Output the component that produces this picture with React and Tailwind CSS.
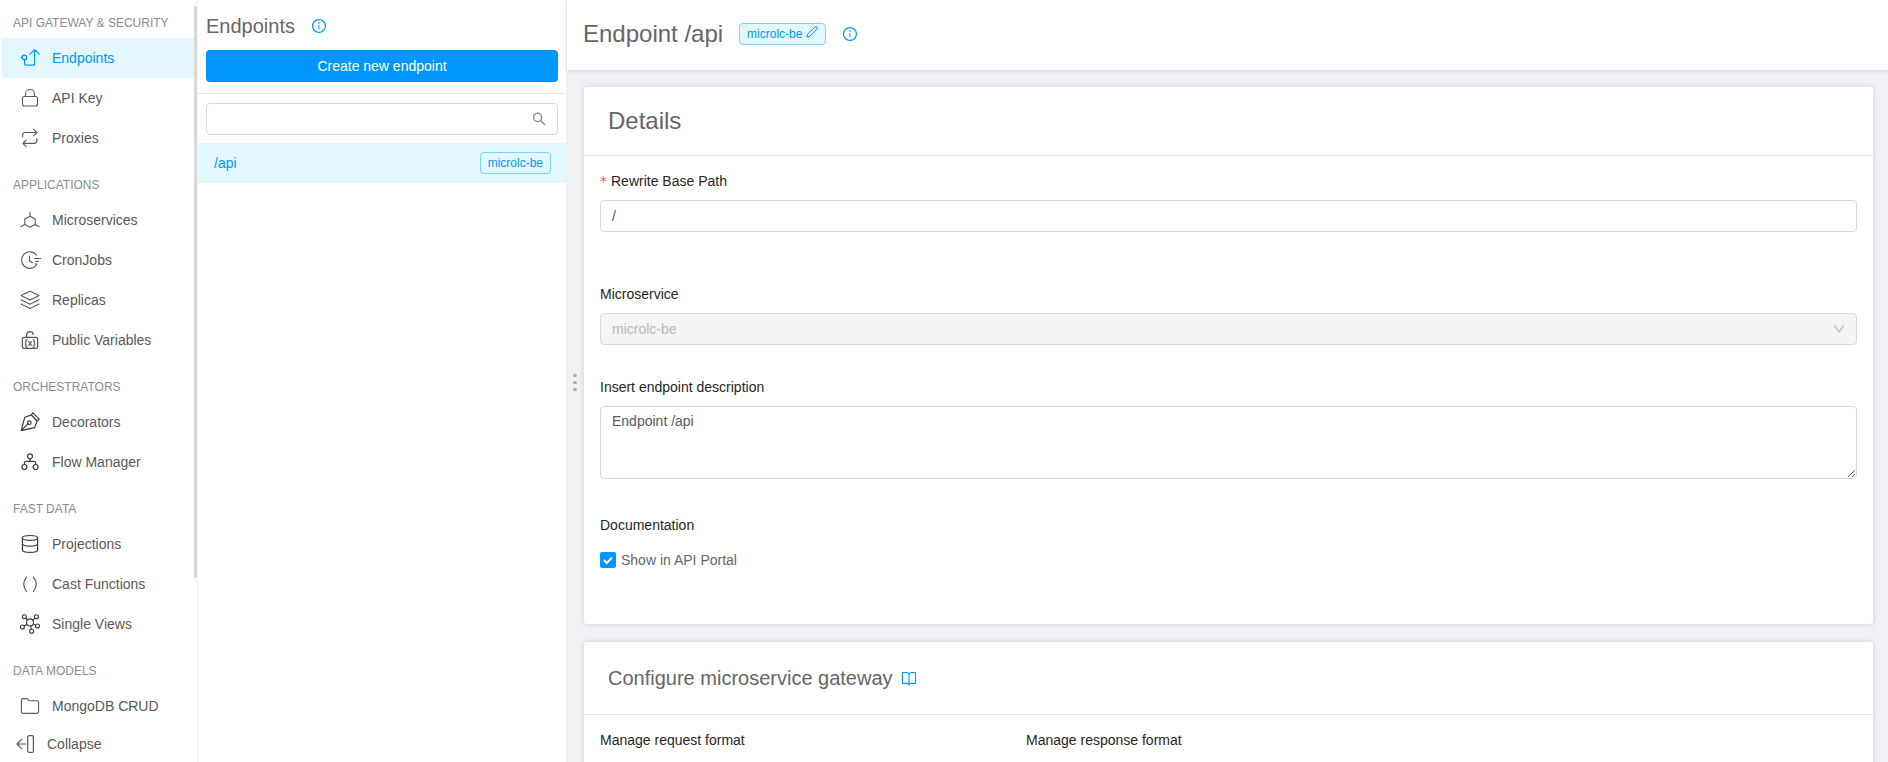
import React from "react";
import { AiOutlineInfoCircle } from "react-icons/ai";

function Icon({ children, w = 1, className = "" }) {
  return (
    <svg
      width="20"
      height="20"
      viewBox="0 0 20 20"
      fill="none"
      stroke="currentColor"
      strokeWidth={w}
      strokeLinecap="round"
      strokeLinejoin="round"
      className={`shrink-0 overflow-visible ${className}`}
    >
      {children}
    </svg>
  );
}

const icons = {
  endpoints: (
    <Icon w={1.2}>
      <circle cx="4.4" cy="9.4" r="2.3" />
      <path d="M1.2 9.4h.9M4.6 11.8v3.4q0 2 2 2h6q2 0 2-2V2M10 6.2l4.6-4.6 4.6 4.6" />
    </Icon>
  ),
  key: (
    <Icon w={1.1}>
      <rect x="2.5" y="8.5" width="15" height="9.5" rx="2" />
      <path d="M5.5 8.5V6a4.5 4.5 0 0 1 9 0v2.5" />
    </Icon>
  ),
  proxies: (
    <Icon w={1.1}>
      <path d="M2.7 9V7q0-2.5 2.5-2.5h11.6M13.5 1.2l3.4 3.3-3.4 3.3M16.9 10.5v2q0 2.9-2.5 2.9H2.9M6.2 12.2l-3.4 3.2 3.4 3.3" />
    </Icon>
  ),
  micro: (
    <Icon w={1.1}>
      <path d="M10 6.2L15.2 9v5.4L10 17.3l-5.2-2.9V9zM10 2v4.2M4.8 14.4L1 16.6M15.2 14.4l3.8 2.2" />
    </Icon>
  ),
  cron: (
    <Icon w={1.1}>
      <path d="M16.6 5.2a8.3 8.3 0 1 0 0 9.8M9.5 6v5l3 1.8M14.7 8.5h6M15.6 11.5h3.2M14.9 14h2" />
    </Icon>
  ),
  replicas: (
    <Icon w={1.1}>
      <path d="M10 1.2l9 4.3-9 4.5-9-4.5zM1 9.8l9 4.4 9-4.4M1 14l9 4.4 9-4.4" />
    </Icon>
  ),
  variables: (
    <Icon w={1.3}>
      <rect x="2.4" y="7.4" width="15.2" height="11" rx="1.6" />
      <path d="M6.6 7.2V5.5q0-3.8 3.4-3.8 2.8 0 3.2 2.6" />
      <text
        x="10"
        y="15.5"
        textAnchor="middle"
        stroke="none"
        fill="currentColor"
        className="font-['Liberation_Sans',sans-serif] text-[9px] font-bold"
      >
        (x)
      </text>
    </Icon>
  ),
  decorators: (
    <Icon w={1.2} className="text-[#3c3c3c]">
      <path d="M1.2 18.6L4.8 5.2l6.6-2.3 5.8 5.9-2.5 6.8zM1.4 18.4l6.8-6.8M11.2 2.8l1.8-1.9 6.2 6.2-2 1.9zM13 .9L19.2 7.1" />
      <circle cx="9.3" cy="10.7" r="1.8" />
    </Icon>
  ),
  flow: (
    <Icon w={1.2} className="text-[#3c3c3c]">
      <circle cx="10" cy="4.3" r="2.5" />
      <circle cx="4.4" cy="15" r="2.5" />
      <circle cx="15.6" cy="15" r="2.5" />
      <path d="M10 6.8v2.6M4.4 12.4v-1.2q0-1.8 1.8-1.8h7.6q1.8 0 1.8 1.8v1.2" />
    </Icon>
  ),
  projections: (
    <Icon w={1.2} className="text-[#3c3c3c]">
      <ellipse cx="10" cy="3.9" rx="7.6" ry="2.4" />
      <path d="M2.4 3.9v12c0 3.2 15.2 3.2 15.2 0v-12M2.4 9.7c0 3.2 15.2 3.2 15.2 0" />
    </Icon>
  ),
  cast: (
    <Icon w={1.2}>
      <path d="M6.6 3.2q-5.8 7 0 14.2M13.4 3.2q5.8 7 0 14.2" />
    </Icon>
  ),
  views: (
    <Icon w={1.1} className="text-[#3c3c3c]">
      <circle cx="10" cy="8.4" r="3.5" />
      <circle cx="4.4" cy="2.8" r="2" />
      <circle cx="16.4" cy="2.8" r="2" />
      <circle cx="2.4" cy="13" r="2" />
      <circle cx="17.5" cy="12" r="2" />
      <circle cx="11.6" cy="17.3" r="2" />
      <path d="M5.8 4.2l1.7 1.7M15 4.2l-2.4 1.8M4.2 12l2.6-1.8M15.7 11.2l-2.4-1M11.3 15.3l-.5-3.4" />
    </Icon>
  ),
  folder: (
    <Icon w={1.1}>
      <path d="M1.4 4.4q0-1.8 1.8-1.8h3.4q.8 0 1.3.7l1.2 1.5h7.7q1.8 0 1.8 1.8v9q0 1.8-1.8 1.8H3.2q-1.8 0-1.8-1.8z" />
    </Icon>
  ),
};

const sections = [
  { title: "API GATEWAY & SECURITY", items: [["endpoints", "Endpoints"], ["key", "API Key"], ["proxies", "Proxies"]] },
  {
    title: "APPLICATIONS",
    items: [["micro", "Microservices"], ["cron", "CronJobs"], ["replicas", "Replicas"], ["variables", "Public Variables"]],
  },
  { title: "ORCHESTRATORS", items: [["decorators", "Decorators"], ["flow", "Flow Manager"]] },
  { title: "FAST DATA", items: [["projections", "Projections"], ["cast", "Cast Functions"], ["views", "Single Views"]] },
  { title: "DATA MODELS", items: [["folder", "MongoDB CRUD"]] },
];

function Sidebar() {
  return (
    <aside className="flex w-[198px] shrink-0 flex-col border-r border-[#f0f0f0] bg-white">
      <div className="flex h-[726px]">
        <nav className="w-[194px] pl-[2px]">
          {sections.map((s, i) => (
            <div key={s.title}>
              <h3
                className={`flex items-end pb-[7px] pl-[11px] text-xs leading-4 text-[#8c8c8c] ${i === 0 ? "h-[38px]" : "h-[42px]"}`}
              >
                {s.title}
              </h3>
              {s.items.map(([icon, label]) => (
                <a
                  key={label}
                  className={`flex h-10 items-center gap-3 pl-[18px] ${icon === "endpoints" ? "bg-[#e2f7fe] text-[#0096ff]" : "text-[#595959]"}`}
                >
                  {icons[icon]}
                  <span>{label}</span>
                </a>
              ))}
            </div>
          ))}
        </nav>
        <div className="mt-[6px] h-[572px] w-[3px] bg-[#d9d9d9]" />
      </div>
      <div className="flex h-9 items-center gap-3 pl-[15px] text-[#595959]">
        <Icon w={1.2}>
          <path d="M2 10h9M6.6 5.4L2 10l4.6 4.6" />
          <rect x="12.7" y="1.6" width="5.7" height="16.8" rx="1.5" />
        </Icon>
        <span>Collapse</span>
      </div>
    </aside>
  );
}

function EndpointList() {
  return (
    <section className="w-[368px] shrink-0 bg-white">
      <div className="h-[94px] border-b border-[#e4e4e4] px-2 pt-3">
        <div className="flex h-7 items-center gap-4">
          <h2 className="text-xl leading-7 text-[#666]">Endpoints</h2>
          <AiOutlineInfoCircle size={16} className="text-[#0096ff]" />
        </div>
        <button className="mt-[10px] block h-8 w-full rounded bg-[#0096ff] text-white">Create new endpoint</button>
      </div>
      <div className="px-2 pt-[9px] pb-2">
        <div className="flex h-8 items-center justify-end rounded border border-[#d9d9d9] pr-[11px]">
          <svg width="14" height="14" viewBox="0 0 14 14" fill="none" stroke="#8c8c8c" strokeWidth="1.4">
            <circle cx="5.6" cy="5.4" r="4.1" />
            <path d="M8.6 8.4l4.6 4.6" />
          </svg>
        </div>
      </div>
      <div className="flex h-10 items-center justify-between bg-[#e2f7fe] pr-[15px] pl-4 text-[#0096ff]">
        <span>/api</span>
        <span className="h-[22px] rounded border border-[#7ad5ff] px-[7px] text-xs leading-5">microlc-be</span>
      </div>
    </section>
  );
}

function Label({ children, className = "" }) {
  return <div className={`leading-[22px] text-[#262626] ${className}`}>{children}</div>;
}

export default function App() {
  return (
    <div className="flex h-[762px] w-[1888px] overflow-hidden bg-white font-['Liberation_Sans',Arial,sans-serif] text-sm">
      <Sidebar />
      <EndpointList />
      <main className="flex min-w-0 flex-1 flex-col bg-[#f0f1f5]">
        <header className="z-10 ml-px flex h-[70px] shrink-0 items-center bg-white pb-[2px] pl-4 shadow-[0_1px_4px_rgba(0,0,0,0.12)]">
          <h1 className="text-2xl text-[#666]">Endpoint /api</h1>
          <span className="ml-4 flex h-[22px] items-center gap-1 rounded border border-[#7ad5ff] bg-[#e2f7fe] px-[7px] text-xs text-[#0096ff]">
            microlc-be
            <svg
              width="12"
              height="12"
              viewBox="0 0 12 12"
              fill="none"
              stroke="currentColor"
              strokeLinejoin="round"
              className="mb-[5px] overflow-visible"
            >
              <path d="M.9 11.1l.7-2.9L8.9 1q1-.9 2 .1 1 1 .1 2L3.8 10.4z" />
            </svg>
          </span>
          <AiOutlineInfoCircle size={16} className="ml-4 text-[#0096ff]" />
        </header>
        <div className="flex min-h-0 flex-1">
          <div className="flex w-[18px] shrink-0 flex-col items-center gap-[3.5px] pt-[303.5px] text-[#adadad]">
            <i className="size-[3.5px] rounded-full bg-current" />
            <i className="size-[3.5px] rounded-full bg-current" />
            <i className="size-[3.5px] rounded-full bg-current" />
          </div>
          <div className="flex w-[1289px] flex-col gap-[18px] pt-[17px]">
            <section className="h-[537px] shrink-0 rounded-[3px] bg-white shadow-[0_0_6px_rgba(0,0,0,0.14)]">
              <h2 className="flex h-[69px] items-center border-b border-[#e4e4e4] pl-6 text-2xl text-[#666]">Details</h2>
              <div className="flex flex-col px-4 pt-[14px]">
                <Label className="flex">
                  <span className="mr-1 w-[7px] font-['DejaVu_Sans',sans-serif] text-[#ff4d5f]">*</span>
                  Rewrite Base Path
                </Label>
                <div className="mt-2 flex h-8 items-center rounded border border-[#d9d9d9] px-[11px] text-[#595959]">/</div>
                <Label className="mt-[51px]">Microservice</Label>
                <div className="mt-2 flex h-8 items-center justify-between rounded border border-[#d9d9d9] bg-[#f4f4f4] px-[11px] text-[#b8b8b8]">
                  microlc-be
                  <svg width="12" height="12" viewBox="0 0 12 12" fill="none" stroke="currentColor" strokeWidth="1.2">
                    <path d="M1.3 2.4L6 8.9l4.7-6.5" />
                  </svg>
                </div>
                <Label className="mt-[31px]">Insert endpoint description</Label>
                <textarea
                  className="mt-2 block h-[73px] w-full resize-y rounded border border-[#d9d9d9] px-[11px] py-[3px] leading-[22px] text-[#595959]"
                  defaultValue="Endpoint /api"
                />
                <Label className="mt-[35px]">Documentation</Label>
                <label className="mt-[13px] flex items-center gap-[5px] leading-[22px] text-[#666]">
                  <span className="flex size-4 items-center justify-center rounded-[2px] bg-[#0096ff]">
                    <svg width="12" height="12" viewBox="0 0 12 12" fill="none" stroke="#fff" strokeWidth="2">
                      <path d="M1.8 6l3 3 5-5.4" />
                    </svg>
                  </span>
                  Show in API Portal
                </label>
              </div>
            </section>
            <section className="h-[300px] shrink-0 rounded-[3px] bg-white shadow-[0_0_6px_rgba(0,0,0,0.14)]">
              <h2 className="flex h-[73px] items-center gap-2 border-b border-[#e4e4e4] pl-6 text-xl text-[#666]">
                Configure microservice gateway
                <svg
                  width="16"
                  height="16"
                  viewBox="0 0 16 16"
                  fill="none"
                  stroke="#0096ff"
                  strokeWidth="1.1"
                  strokeLinejoin="round"
                >
                  <path d="M1.5 2.5h4Q8 2.5 8 4.6 8 2.5 10.5 2.5h4v10.9h-4.6Q8 13.4 8 15q0-1.6-1.9-1.6H1.5zM8 4.4v10.4" />
                </svg>
              </h2>
              <div className="grid grid-cols-[426px_1fr] px-4 pt-[14px]">
                <Label>Manage request format</Label>
                <Label>Manage response format</Label>
              </div>
            </section>
          </div>
        </div>
      </main>
    </div>
  );
}
